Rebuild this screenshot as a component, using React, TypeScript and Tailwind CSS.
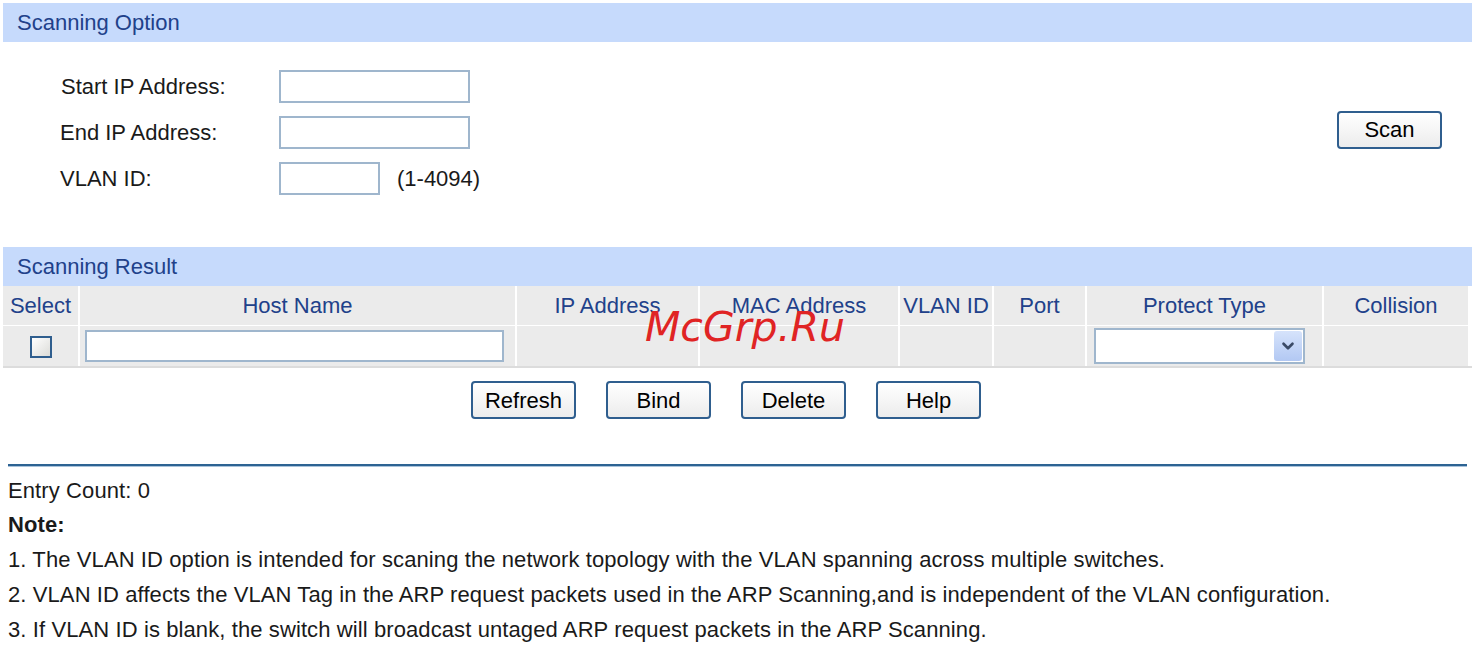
import { ChevronDown } from 'lucide-react';

const columns = [
  { label: 'Select' },
  { label: 'Host Name' },
  { label: 'IP Address' },
  { label: 'MAC Address' },
  { label: 'VLAN ID' },
  { label: 'Port' },
  { label: 'Protect Type' },
  { label: 'Collision' },
];

const notes = [
  '1. The VLAN ID option is intended for scaning the network topology with the VLAN spanning across multiple switches.',
  '2. VLAN ID affects the VLAN Tag in the ARP request packets used in the ARP Scanning,and is independent of the VLAN configuration.',
  '3. If VLAN ID is blank, the switch will broadcast untaged ARP request packets in the ARP Scanning.',
];

const SectionBar = ({ title }: { title: string }) => (
  <div className="mx-[3px] h-[39px] bg-[#c6dafc] flex items-center pl-[14px] text-[22px] text-[#21418a]">
    {title}
  </div>
);

const TextBox = ({ className }: { className: string }) => (
  <div className={`h-[33px] bg-white border-2 border-[#9fb6cd] ${className}`} />
);

const Btn = ({ label }: { label: string }) => (
  <button className="w-[105px] h-[38px] rounded-[4px] border-2 border-[#2f5e8e] bg-gradient-to-b from-white to-[#ececec] text-[22px] text-black flex items-center justify-center">
    {label}
  </button>
);

export default function App() {
  return (
    <div className="relative w-[1475px] h-[652px] bg-white overflow-hidden font-['Liberation_Sans',Arial,sans-serif]">
      <div className="pt-[3px]">
        <SectionBar title="Scanning Option" />
      </div>

      <div className="flex items-center justify-between pr-[33px] mt-[28px]">
        <div className="flex flex-col gap-[13px] pl-[60px] text-[22px] text-[#1a1a1a]">
          <div className="flex items-center">
            <span className="w-[219px] pl-[1px]">Start IP Address:</span>
            <TextBox className="w-[191px]" />
          </div>
          <div className="flex items-center">
            <span className="w-[219px]">End IP Address:</span>
            <TextBox className="w-[191px]" />
          </div>
          <div className="flex items-center">
            <span className="w-[219px]">VLAN ID:</span>
            <TextBox className="w-[101px]" />
            <span className="ml-[17px]">(1-4094)</span>
          </div>
        </div>
        <div className="mb-[6px]">
          <Btn label="Scan" />
        </div>
      </div>

      <div className="mt-[52px]">
        <SectionBar title="Scanning Result" />
      </div>

      <div className="mx-[3px] grid grid-cols-[75px_435px_181px_198px_92px_91px_235px_144px] gap-x-[2px] gap-y-[1px] bg-white border-b-2 border-[#dcdcdc]">
        {columns.map((c) => (
          <div
            key={c.label}
            className="h-[39px] bg-[#ebebeb] flex items-center justify-center text-[22px] text-[#21418a]"
          >
            {c.label}
          </div>
        ))}
        <div className="h-[40px] bg-[#ebebeb] flex items-center justify-center pt-[2px]">
          <div className="w-[22px] h-[22px] border-2 border-[#2f5e8e] bg-gradient-to-br from-white to-[#dcdcd8]" />
        </div>
        <div className="h-[40px] bg-[#ebebeb] flex items-center pl-[5px]">
          <div className="w-[419px] h-[32px] bg-white border-2 border-[#9fb6cd]" />
        </div>
        <div className="h-[40px] bg-[#ebebeb]" />
        <div className="h-[40px] bg-[#ebebeb]" />
        <div className="h-[40px] bg-[#ebebeb]" />
        <div className="h-[40px] bg-[#ebebeb]" />
        <div className="h-[40px] bg-[#ebebeb] flex items-center pl-[7px]">
          <div className="w-[211px] h-[36px] bg-white border-2 border-[#9fb6cd] flex items-center justify-end pr-[1px]">
            <div className="w-[28px] h-[30px] rounded-[3px] bg-gradient-to-b from-[#d6e3fb] to-[#b2c8f3] flex items-center justify-center">
              <ChevronDown className="w-[18px] h-[18px] text-[#3a4a66]" strokeWidth={3.5} />
            </div>
          </div>
        </div>
        <div className="h-[40px] bg-[#ebebeb]" />
      </div>

      <div className="flex justify-center gap-[30px] pr-[23px] mt-[13px]">
        <Btn label="Refresh" />
        <Btn label="Bind" />
        <Btn label="Delete" />
        <Btn label="Help" />
      </div>

      <div className="mx-[8px] mt-[45px] h-[3px] bg-[#2d6393] border-b border-[#a9c3db]" />

      <div className="pl-[8px] mt-[7px] text-[22px] text-[#1a1a1a] leading-[34px] tracking-[0.1px]">
        <div>Entry Count: 0</div>
        <div className="font-bold">Note:</div>
        {notes.map((n) => (
          <div key={n} className="h-[35px] flex items-center">
            {n}
          </div>
        ))}
      </div>

      <div className="absolute left-[645px] top-[297px] text-[41px] italic text-[#e02424] font-['DejaVu_Sans',sans-serif]">
        McGrp.Ru
      </div>
    </div>
  );
}
